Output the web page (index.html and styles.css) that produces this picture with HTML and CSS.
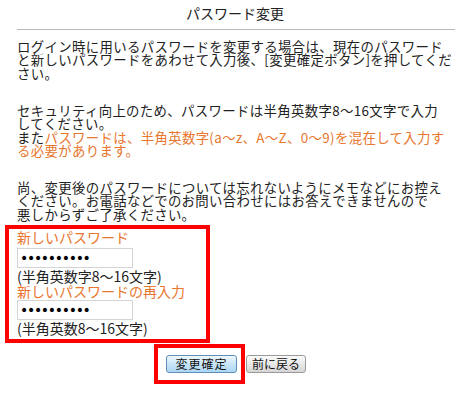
FILE: index.html
```
<!DOCTYPE html>
<html lang="ja">
<head>
<meta charset="utf-8">
<title>パスワード変更</title>
<link rel="stylesheet" href="styles.css">
</head>
<body>
<div class="page">
  <h1 class="title">パスワード変更</h1>
  <div class="rule"></div>
  <p class="para first">ログイン時に用いるパスワードを変更する場合は、現在のパスワード<br>と新しいパスワードをあわせて入力後、[変更確定ボタン]を押してくだ<br>さい。</p>
  <p class="para">セキュリティ向上のため、パスワードは半角英数字8～16文字で入力<br>してください。<br>また<span class="warn">パスワードは、半角英数字(a～z、A～Z、0～9)を混在して入力す<br>る必要があります。</span></p>
  <p class="para">尚、変更後のパスワードについては忘れないようにメモなどにお控え<br>ください。お電話などでのお問い合わせにはお答えできませんので<br>悪しからずご了承ください。</p>
  <div class="formbox">
    <div class="label">新しいパスワード</div>
    <input class="pw pw1" type="password" value="aaaaaaaaaa">
    <div class="hint">(半角英数字8～16文字)</div>
    <div class="label">新しいパスワードの再入力</div>
    <input class="pw pw2" type="password" value="aaaaaaaaaa">
    <div class="hint">(半角英数8～16文字)</div>
  </div>
  <div class="actions">
    <div class="btnbox"><button class="btn primary" type="button">変更確定</button></div>
    <button class="btn back" type="button">前に戻る</button>
  </div>
</div>
</body>
</html>
```
FILE: styles.css
```
html, body {
  margin: 0;
  padding: 0;
  background: #fff;
}
.page {
  width: 470px;
  font-family: "Noto Sans CJK JP", "Noto Sans", sans-serif;
  font-size: 14px;
  color: #222;
}
.title {
  margin: 0;
  padding-top: 6px;
  height: 23px;
  font-size: 14px;
  font-weight: normal;
  line-height: 14px;
  text-align: center;
  color: #222;
}
.rule {
  margin: 0 15px 0 17px;
  border-top: 1px solid #b8b8b8;
}
.para {
  margin: 23.6px 0 0 17px;
  font-size: 13.4px;
  line-height: 13.4px;
  white-space: nowrap;
  letter-spacing: 0.35px;
}
.para.first {
  margin-top: 10px;
}
.warn {
  color: #e8762d;
}
.formbox {
  margin: 4px 0 0 5px;
  width: 189px;
  border: 4px solid #f00;
  padding: 1px 0 3px 8px;
}
.label {
  color: #e8762d;
  line-height: 15px;
  height: 15px;
}
.hint {
  line-height: 15px;
  height: 15px;
  margin-top: 1px;
}
.pw {
  display: block;
  box-sizing: border-box;
  width: 116px;
  height: 20px;
  margin: 3px 0 0 0;
  padding: 0 2px;
  border: 1px solid #d4d4d4;
  font-family: "DejaVu Sans", sans-serif;
  font-size: 14px;
  letter-spacing: -1.3px;
  color: #000;
  background: #fff;
  outline: none;
}
.pw2 {
  margin-top: 1px;
}
.actions {
  display: flex;
  align-items: center;
  margin-left: 154px;
  margin-top: 1px;
}
.btnbox {
  border: 4px solid #f00;
  padding: 7px 4px 7px 8px;
  display: flex;
}
.btn {
  box-sizing: border-box;
  height: 18px;
  padding: 0;
  font-family: "Noto Sans CJK JP", sans-serif;
  font-size: 12px;
  line-height: 16px;
  color: #111;
  border-radius: 3px;
  cursor: pointer;
}
.primary {
  width: 71px;
  letter-spacing: 1px;
  border: 1px solid #5f8fb8;
  background: linear-gradient(#eef7fd, #c9e5f8 50%, #acd6f3);
}
.back {
  width: 60px;
  margin-left: 1px;
  border: 1px solid #9a9a9a;
  background: linear-gradient(#fbfbfb, #e8e8e8 50%, #d6d6d6);
}
```
